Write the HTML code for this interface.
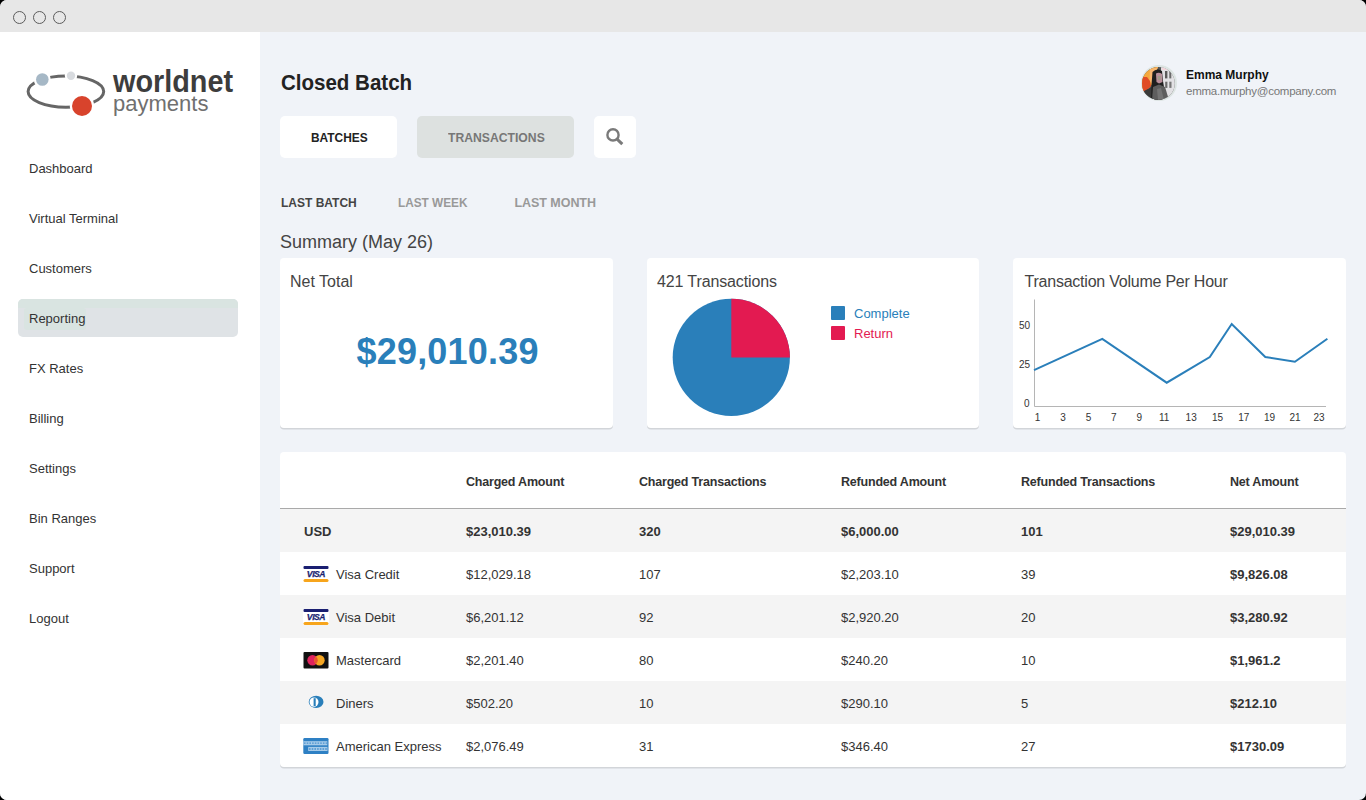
<!DOCTYPE html>
<html><head><meta charset="utf-8">
<style>
*{margin:0;padding:0;box-sizing:border-box}
html,body{width:1366px;height:800px;overflow:hidden;background:#000}
body{font-family:"Liberation Sans",sans-serif;}
#win{position:absolute;left:0;top:0;width:1366px;height:800px;border-radius:7px;overflow:hidden;background:#f0f3f8}
.t{position:absolute;white-space:nowrap;line-height:1}
#bar{position:absolute;left:0;top:0;width:1366px;height:32px;background:#e7e7e7}
.dot{position:absolute;top:10.8px;width:13px;height:13px;border-radius:50%;border:1.5px solid #5c5c5c}
#side{position:absolute;left:0;top:32px;width:260px;height:768px;background:#fff}
.nav{position:absolute;left:29px;font-size:13px;color:#333}
#hl{position:absolute;left:18px;top:299px;width:220px;height:38px;border-radius:5px;background:#dfe3e6}
.btn{position:absolute;top:116px;height:42px;border-radius:5px}
.card{position:absolute;background:#fff;border-radius:4px;box-shadow:0 1.6px 0.6px rgba(0,0,0,0.12)}
.th{font-size:12.5px;font-weight:bold;color:#333;letter-spacing:-0.2px}
.row{position:absolute;left:280px;width:1066px;height:43px}
.c{font-size:13px;color:#333}
.b{font-weight:bold}
.tab{font-size:12.5px;font-weight:bold;color:#999}
.ct{font-size:16px;color:#444}
.yl{font-size:10px;color:#333}
.xl{font-size:10px;color:#333}
</style></head><body>
<div id="win">
  <div id="bar">
    <div class="dot" style="left:13px"></div>
    <div class="dot" style="left:33px"></div>
    <div class="dot" style="left:53px"></div>
  </div>
  <div id="side"></div>
  <!-- logo -->
  <svg style="position:absolute;left:0;top:40px" width="260" height="90" viewBox="0 40 260 90">
    <ellipse cx="65.9" cy="91.6" rx="37.8" ry="15.6" fill="none" stroke="#666" stroke-width="3"/>
    <circle cx="42.3" cy="79.5" r="8.5" fill="#fff"/>
    <circle cx="71" cy="75.8" r="6.2" fill="#fff"/>
    <circle cx="82" cy="106" r="12.2" fill="#fff"/>
    <circle cx="42.3" cy="79.5" r="6.3" fill="#a6b8c6"/>
    <circle cx="71" cy="75.8" r="4.2" fill="#d8dbdf"/>
    <circle cx="82" cy="106" r="10" fill="#d8432c"/>
  </svg>
  <div class="t" style="left:113px;top:65.5px;font-size:31.5px;font-weight:bold;color:#3d3d3d;transform:scaleX(0.915);transform-origin:0 0">worldnet</div>
  <div class="t" style="left:113px;top:93px;font-size:22px;color:#707070">payments</div>

  <div id="hl"><div style="position:absolute;left:0;top:0;width:220px;height:9px;background:#d9e4e1;border-radius:5px 5px 0 0"></div><div style="position:absolute;left:6px;top:9px;width:62px;height:22px;background:#d9e4e1;border-radius:3px"></div></div>
  <div class="t nav" style="top:162px">Dashboard</div>
  <div class="t nav" style="top:212px">Virtual Terminal</div>
  <div class="t nav" style="top:262px">Customers</div>
  <div class="t nav" style="top:312px">Reporting</div>
  <div class="t nav" style="top:362px">FX Rates</div>
  <div class="t nav" style="top:412px">Billing</div>
  <div class="t nav" style="top:462px">Settings</div>
  <div class="t nav" style="top:512px">Bin Ranges</div>
  <div class="t nav" style="top:562px">Support</div>
  <div class="t nav" style="top:612px">Logout</div>

  <!-- header -->
  <div class="t" style="left:281px;top:71px;font-size:22.8px;font-weight:bold;color:#222;transform:scaleX(0.9);transform-origin:0 0">Closed Batch</div>
  <div style="position:absolute;left:1140.5px;top:65.4px;width:36px;height:36px;border-radius:50%;background:#dde5e3"></div>
  <svg style="position:absolute;left:1142.1px;top:67px" width="32.8" height="32.8" viewBox="0 0 32.8 32.8">
    <defs><clipPath id="av"><circle cx="16.4" cy="16.4" r="16.4"/></clipPath></defs>
    <g clip-path="url(#av)">
      <rect width="33" height="33" fill="#555"/>
      <rect x="19" y="0" width="14" height="33" fill="#e2e1e4"/>
      <rect x="23" y="4" width="2.4" height="7.4" fill="#5a5a5a"/>
      <rect x="27.3" y="4" width="2" height="7.4" fill="#6a6a6a"/>
      <rect x="23.2" y="14.7" width="2.2" height="6.2" fill="#6a6a6a"/>
      <rect x="27.3" y="14.7" width="2.2" height="6.2" fill="#777"/>
      <rect x="20" y="0" width="6" height="3" fill="#f3d6dc"/>
      <path d="M0 0 H16 L14 5 L11.5 12 L10.5 17 L6 22 L0 24 Z" fill="#f5a83c"/>
      <path d="M8 2 L16 0 L13.5 6 L11 14 L10.2 17 L7.5 14 Z" fill="#f8b66e"/>
      <path d="M0 10 L5 10 L8 14 L9 19 L6 22 L2 25 L0 25 Z" fill="#e04b26"/>
      <path d="M0 25 L6 22 L10 20 L9 33 H0 Z" fill="#3a3a3a"/>
      <path d="M10.5 5 Q13 2 17 2.5 L20 4 L21 14 L22 20 L20 33 H9 L9.5 18 Z" fill="#1f1f1f"/>
      <path d="M14 6.5 Q17 5 20 7 L20.5 15 L17 16.5 L14.5 15 Z" fill="#b98f9b"/>
      <path d="M15.5 9 L19 9 L18.5 13 L16 13 Z" fill="#a09a8a"/>
      <path d="M11 20 L17 17.5 L23 20 L27 33 H10 Z" fill="#5e5e5e"/>
      <path d="M15 22 L19 21 L22 33 H16 Z" fill="#747474"/>
    </g>
  </svg>
  <div class="t" style="left:1186px;top:69.4px;font-size:12px;font-weight:bold;color:#111">Emma Murphy</div>
  <div class="t" style="left:1186px;top:85.7px;font-size:11.5px;color:#777;letter-spacing:-0.25px">emma.murphy@company.com</div>

  <!-- buttons -->
  <div class="btn" style="left:280px;width:117px;background:#fff"></div>
  <div class="t" style="left:310.5px;top:131px;font-size:13px;font-weight:bold;color:#222;transform:scaleX(0.916);transform-origin:0 0">BATCHES</div>
  <div class="btn" style="left:417px;width:157px;background:#dde1e0"></div>
  <div class="t" style="left:447.5px;top:131px;font-size:13px;font-weight:bold;color:#777;transform:scaleX(0.937);transform-origin:0 0">TRANSACTIONS</div>
  <div class="btn" style="left:594px;width:42px;background:#fff"></div>
  <svg style="position:absolute;left:600px;top:122px" width="30" height="30" viewBox="0 0 30 30">
    <circle cx="13" cy="12.9" r="5.6" fill="none" stroke="#7a7a7a" stroke-width="2.4"/>
    <path d="M16.8 16.9 L22.3 22.2" stroke="#7a7a7a" stroke-width="3" stroke-linecap="butt"/>
  </svg>

  <!-- tabs -->
  <div class="t tab" style="left:280.5px;top:197px;color:#444;transform:scaleX(0.96);transform-origin:0 0">LAST BATCH</div>
  <div class="t tab" style="left:397.5px;top:197px;transform:scaleX(0.944);transform-origin:0 0">LAST WEEK</div>
  <div class="t tab" style="left:514.5px;top:197px;letter-spacing:-0.05px">LAST MONTH</div>

  <div class="t" style="left:280px;top:233px;font-size:18px;color:#444">Summary (May 26)</div>

  <!-- cards -->
  <div class="card" style="left:280px;top:258px;width:333px;height:170px"></div>
  <div class="card" style="left:647px;top:258px;width:332px;height:170px"></div>
  <div class="card" style="left:1013px;top:258px;width:333px;height:170px"></div>

  <div class="t ct" style="left:290px;top:274px">Net Total</div>
  <div class="t" style="left:356.5px;top:334px;font-size:36px;letter-spacing:0.2px;font-weight:bold;color:#2a7fba">$29,010.39</div>

  <div class="t ct" style="left:657px;top:274px;letter-spacing:-0.12px">421 Transactions</div>
  <svg style="position:absolute;left:647px;top:258px" width="332" height="170" viewBox="647 258 332 170">
    <circle cx="731.3" cy="357.4" r="58.6" fill="#2a7fba"/>
    <path d="M731.3 357.4 V298.8 A58.6 58.6 0 0 1 789.9 357.4 Z" fill="#e31a51"/>
    <rect x="831" y="306" width="14" height="14" rx="1" fill="#2a7fba"/>
    <rect x="831" y="326" width="14" height="14" rx="1" fill="#e31a51"/>
  </svg>
  <div class="t" style="left:854px;top:307px;font-size:13px;color:#2a7fba">Complete</div>
  <div class="t" style="left:854px;top:327px;font-size:13px;color:#e31a51">Return</div>

  <div class="t ct" style="left:1024.5px;top:274px;letter-spacing:-0.23px">Transaction Volume Per Hour</div>
  <svg style="position:absolute;left:1013px;top:258px" width="333" height="170" viewBox="1013 258 333 170">
    <path d="M1034.5 299.5 V406.5 H1326" fill="none" stroke="#b5b5b5" stroke-width="1"/>
    <polyline points="1034,370.2 1102.3,338.8 1166.7,382.7 1209.8,357 1231.7,324 1265.3,357 1294.9,361.8 1327.4,338.8" fill="none" stroke="#2a7fba" stroke-width="2"/>
  </svg>
  <div class="t yl" style="left:1019px;top:321px">50</div>
  <div class="t yl" style="left:1019px;top:360px">25</div>
  <div class="t yl" style="left:1024px;top:399px">0</div>
  <div class="t xl" style="left:1034.8px;top:412.5px">1</div>
  <div class="t xl" style="left:1060.3px;top:412.5px">3</div>
  <div class="t xl" style="left:1085.7px;top:412.5px">5</div>
  <div class="t xl" style="left:1110.9px;top:412.5px">7</div>
  <div class="t xl" style="left:1136.4px;top:412.5px">9</div>
  <div class="t xl" style="left:1159.0px;top:412.5px">11</div>
  <div class="t xl" style="left:1185.6px;top:412.5px">13</div>
  <div class="t xl" style="left:1211.9px;top:412.5px">15</div>
  <div class="t xl" style="left:1238.3px;top:412.5px">17</div>
  <div class="t xl" style="left:1264.0px;top:412.5px">19</div>
  <div class="t xl" style="left:1289.4px;top:412.5px">21</div>
  <div class="t xl" style="left:1313.4px;top:412.5px">23</div>

  <!-- table -->
  <div class="card" style="left:280px;top:452px;width:1066px;height:315px;overflow:hidden">
  </div>
  <div style="position:absolute;left:280px;top:508px;width:1066px;height:1px;background:#a9a9a9"></div>
  <div class="row" style="top:509px;background:#f4f4f4"></div>
  <div class="row" style="top:595px;background:#f4f4f4"></div>
  <div class="row" style="top:681px;background:#f4f4f4"></div>

  <div class="t th" style="left:466px;top:476px">Charged Amount</div>
  <div class="t th" style="left:639px;top:476px">Charged Transactions</div>
  <div class="t th" style="left:841px;top:476px">Refunded Amount</div>
  <div class="t th" style="left:1021px;top:476px">Refunded Transactions</div>
  <div class="t th" style="left:1230px;top:476px">Net Amount</div>
  <div class="t c b" style="left:304px;top:525px">USD</div>
  <div class="t c b" style="left:466px;top:525px">$23,010.39</div>
  <div class="t c b" style="left:639px;top:525px">320</div>
  <div class="t c b" style="left:841px;top:525px">$6,000.00</div>
  <div class="t c b" style="left:1021px;top:525px">101</div>
  <div class="t c b" style="left:1230px;top:525px">$29,010.39</div>
  <svg style="position:absolute;left:303px;top:566px" width="26" height="17" viewBox="0 0 26 17"><rect x="0" y="0" width="26" height="16" fill="#fff"/><rect x="0.5" y="0" width="25" height="3" rx="1" fill="#1a1f71"/><rect x="0.5" y="13" width="25" height="3" rx="1.5" fill="#f7a51c"/><text x="13" y="11.4" text-anchor="middle" font-family="Liberation Sans" font-style="italic" font-weight="bold" font-size="8.6" fill="#1a1f71" stroke="#1a1f71" stroke-width="0.25" letter-spacing="-0.45">VISA</text></svg>
  <div class="t c" style="left:336px;top:568px">Visa Credit</div>
  <div class="t c" style="left:466px;top:568px">$12,029.18</div>
  <div class="t c" style="left:639px;top:568px">107</div>
  <div class="t c" style="left:841px;top:568px">$2,203.10</div>
  <div class="t c" style="left:1021px;top:568px">39</div>
  <div class="t c b" style="left:1230px;top:568px">$9,826.08</div>
  <svg style="position:absolute;left:303px;top:609px" width="26" height="17" viewBox="0 0 26 17"><rect x="0" y="0" width="26" height="16" fill="#fff"/><rect x="0.5" y="0" width="25" height="3" rx="1" fill="#1a1f71"/><rect x="0.5" y="13" width="25" height="3" rx="1.5" fill="#f7a51c"/><text x="13" y="11.4" text-anchor="middle" font-family="Liberation Sans" font-style="italic" font-weight="bold" font-size="8.6" fill="#1a1f71" stroke="#1a1f71" stroke-width="0.25" letter-spacing="-0.45">VISA</text></svg>
  <div class="t c" style="left:336px;top:611px">Visa Debit</div>
  <div class="t c" style="left:466px;top:611px">$6,201.12</div>
  <div class="t c" style="left:639px;top:611px">92</div>
  <div class="t c" style="left:841px;top:611px">$2,920.20</div>
  <div class="t c" style="left:1021px;top:611px">20</div>
  <div class="t c b" style="left:1230px;top:611px">$3,280.92</div>
  <svg style="position:absolute;left:303px;top:652px" width="26" height="17" viewBox="0 0 26 17"><rect x="0.5" y="0" width="25" height="16.5" rx="1" fill="#111"/><circle cx="9.5" cy="8.3" r="5.2" fill="#e0245e"/><circle cx="16.5" cy="8.3" r="5.2" fill="#f5a623"/><path d="M13 4.4 A5.2 5.2 0 0 1 13 12.2 A5.2 5.2 0 0 1 13 4.4Z" fill="#e8552f"/></svg>
  <div class="t c" style="left:336px;top:654px">Mastercard</div>
  <div class="t c" style="left:466px;top:654px">$2,201.40</div>
  <div class="t c" style="left:639px;top:654px">80</div>
  <div class="t c" style="left:841px;top:654px">$240.20</div>
  <div class="t c" style="left:1021px;top:654px">10</div>
  <div class="t c b" style="left:1230px;top:654px">$1,961.2</div>
  <svg style="position:absolute;left:303px;top:695px" width="26" height="17" viewBox="0 0 26 17"><ellipse cx="13.1" cy="6.9" rx="7.4" ry="6.1" fill="#2a7fba"/><ellipse cx="11" cy="7.1" rx="4.5" ry="4.7" fill="#fff"/><rect x="10.6" y="3.2" width="2.1" height="7.8" fill="#2a7fba"/></svg>
  <div class="t c" style="left:336px;top:697px">Diners</div>
  <div class="t c" style="left:466px;top:697px">$502.20</div>
  <div class="t c" style="left:639px;top:697px">10</div>
  <div class="t c" style="left:841px;top:697px">$290.10</div>
  <div class="t c" style="left:1021px;top:697px">5</div>
  <div class="t c b" style="left:1230px;top:697px">$212.10</div>
  <svg style="position:absolute;left:303px;top:738px" width="26" height="17" viewBox="0 0 26 17"><rect x="0.3" y="0.1" width="25.2" height="15.8" rx="1.2" fill="#2e80c4"/><rect x="0.3" y="3.2" width="24" height="4.1" fill="#a6cbe9"/><rect x="5.2" y="8.9" width="19.3" height="4.1" fill="#a6cbe9"/><path d="M1 5.2 H24 M6 11 H24" stroke="#4a92cf" stroke-width="1.3" stroke-dasharray="1.6 1.1"/></svg>
  <div class="t c" style="left:336px;top:740px">American Express</div>
  <div class="t c" style="left:466px;top:740px">$2,076.49</div>
  <div class="t c" style="left:639px;top:740px">31</div>
  <div class="t c" style="left:841px;top:740px">$346.40</div>
  <div class="t c" style="left:1021px;top:740px">27</div>
  <div class="t c b" style="left:1230px;top:740px">$1730.09</div>
</div>
</body></html>
